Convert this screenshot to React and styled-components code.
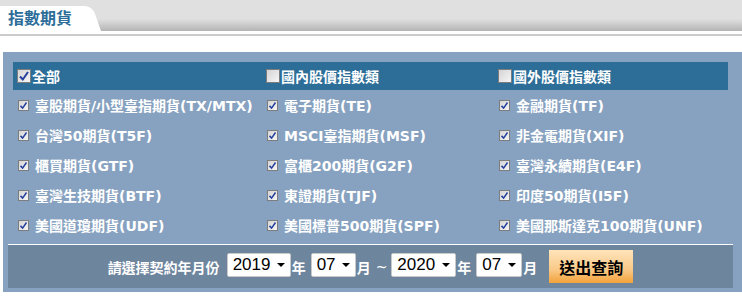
import React from 'react'
import styled, {createGlobalStyle} from 'styled-components'

const GlobalStyle = createGlobalStyle`
  body {
    margin: 0;
    background: #fff;
    overflow: hidden;
    font-family: "DejaVu Sans", "Noto Sans CJK TC", sans-serif;
  }
`

const TabBar = styled.div`
  height: 31px;
  display: flex;
  align-items: flex-end;
  background: linear-gradient(#e0e0e0 0, #e0e0e0 19px, #b4b4b4 31px);
`

const Tab = styled.div`
  width: 102px;
  height: 25px;
  box-sizing: border-box;
  padding: 3px 0 0 8px;
  background: #fff;
  clip-path: path('M0,0 H84 Q92,0 95,8 L101,25 H0 Z');
  color: #2c6d99;
  font-size: 16px;
  font-weight: bold;
  line-height: 20px;
`

const Rule = styled.div`
  margin-top: 3px;
  height: 2px;
  background: #cbcbcb;
`

const Panel = styled.div`
  margin: 16px 0 0 3px;
  width: 745px;
  padding: 10px 0 4px;
  background: #87a2c0;
`

const Grid = styled.div`
  margin-left: 10px;
  width: 715px;
  display: grid;
  grid-template-columns: 249px 232px 234px;
`

const Cell = styled.label`
  display: flex;
  align-items: center;
  height: ${p => (p.$head ? '28px' : '30px')};
  padding-left: ${p => (p.$head ? '4px' : '5px')};
  background: ${p => (p.$head ? '#2d6e98' : 'transparent')};
  color: #fff;
  font-size: 14px;
  font-weight: bold;
  white-space: nowrap;
`

const Box = styled.span`
  flex: none;
  box-sizing: border-box;
  width: ${p => p.$size}px;
  height: ${p => p.$size}px;
  margin-right: ${p => (p.$head ? '1px' : '6px')};
  border: 1px solid #7d7d7d;
  background: linear-gradient(135deg, #d4d4d4, #f6f6f6);
  display: flex;
  align-items: center;
  justify-content: center;
`

const BottomBar = styled.div`
  margin: 4px 0 0 5px;
  width: 725px;
  height: 43px;
  border-top: 1px solid #fff;
  background: #6e859e;
  display: flex;
  align-items: center;
  justify-content: center;
  color: #fff;
  font-size: 14px;
  font-weight: bold;
`

const Label = styled.span`
  margin-right: 7px;
`

const Unit = styled.span`
  margin: 0 5px 0 1px;
`

const Tilde = styled.span`
  margin: 0 4px 0 0;
  font-weight: normal;
`

const SelectWrap = styled.span`
  position: relative;
  display: inline-flex;
  margin-top: -4px;
  &::after {
    content: '';
    position: absolute;
    right: 6px;
    top: 10px;
    border-left: 4px solid transparent;
    border-right: 4px solid transparent;
    border-top: 4px solid #000;
    pointer-events: none;
  }
`

const Select = styled.select`
  appearance: none;
  box-sizing: border-box;
  width: ${p => p.$w}px;
  height: 24px;
  padding: 0 0 0 5px;
  border: 1px solid #c9c9c9;
  border-radius: 2px;
  background: #fff;
  color: #000;
  font-family: "Liberation Sans", Arial, sans-serif;
  font-size: 17px;
  outline: none;
`

const Submit = styled.button`
  margin-left: 7px;
  width: 84px;
  height: 33px;
  border: none;
  background: linear-gradient(#ffe4bb, #f9c987 60%, #f2a23a);
  color: #000;
  font-family: "DejaVu Sans", "Noto Sans CJK TC", sans-serif;
  font-size: 16px;
  font-weight: bold;
  padding: 0;
`

const Checkbox = ({checked, head}) => {
  const size = head ? 14 : 11
  return <Box $size={size} $head={head}>
    {checked &&
      <svg width={size - 2} height={size - 2} viewBox="0 0 12 12">
        <path d="M2 6.5 L4.8 9.5 L10 2" fill="none" stroke="#25409c" strokeWidth="2"/>
      </svg>
    }
  </Box>
}

const heads = [
  {text: '全部', checked: true},
  {text: '國內股價指數類', checked: false},
  {text: '國外股價指數類', checked: false},
]

const items = [
  '臺股期貨/小型臺指期貨(TX/MTX)', '電子期貨(TE)', '金融期貨(TF)',
  '台灣50期貨(T5F)', 'MSCI臺指期貨(MSF)', '非金電期貨(XIF)',
  '櫃買期貨(GTF)', '富櫃200期貨(G2F)', '臺灣永續期貨(E4F)',
  '臺灣生技期貨(BTF)', '東證期貨(TJF)', '印度50期貨(I5F)',
  '美國道瓊期貨(UDF)', '美國標普500期貨(SPF)', '美國那斯達克100期貨(UNF)',
]

export default function App() {
  return <>
    <GlobalStyle/>
    <TabBar>
      <Tab>指數期貨</Tab>
    </TabBar>
    <Rule/>
    <Panel>
      <Grid>
        {heads.map(h =>
          <Cell key={h.text} $head>
            <Checkbox checked={h.checked} head/>{h.text}
          </Cell>
        )}
        {items.map(text =>
          <Cell key={text}>
            <Checkbox checked/>{text}
          </Cell>
        )}
      </Grid>
      <BottomBar>
        <Label>請選擇契約年月份</Label>
        <SelectWrap>
          <Select $w={64} defaultValue="2019">
            <option>2019</option>
            <option>2020</option>
          </Select>
        </SelectWrap>
        <Unit>年</Unit>
        <SelectWrap>
          <Select $w={45} defaultValue="07">
            <option>07</option>
          </Select>
        </SelectWrap>
        <Unit>月</Unit>
        <Tilde>~</Tilde>
        <SelectWrap>
          <Select $w={65} defaultValue="2020">
            <option>2019</option>
            <option>2020</option>
          </Select>
        </SelectWrap>
        <Unit>年</Unit>
        <SelectWrap>
          <Select $w={46} defaultValue="07">
            <option>07</option>
          </Select>
        </SelectWrap>
        <Unit>月</Unit>
        <Submit>送出查詢</Submit>
      </BottomBar>
    </Panel>
  </>
}
